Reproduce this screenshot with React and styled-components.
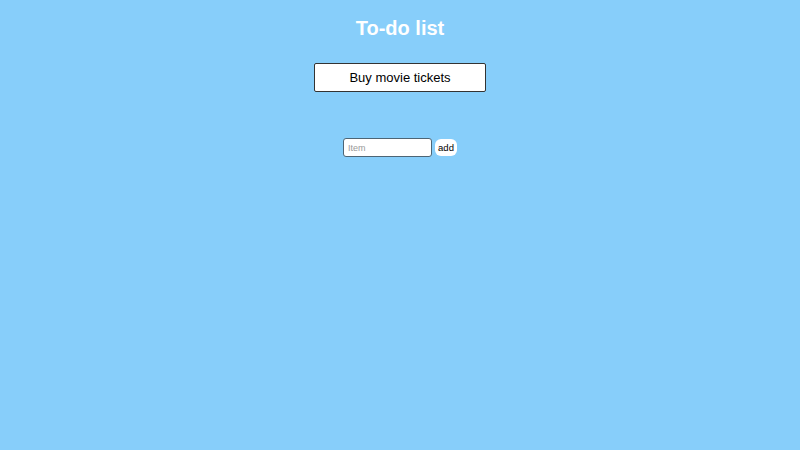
import React, { useState } from 'react';
import styled, { createGlobalStyle } from 'styled-components';

const GlobalStyle = createGlobalStyle`
  html, body {
    margin: 0;
    padding: 0;
    height: 100%;
    background: #87cefa;
    font-family: "Liberation Sans", Arial, sans-serif;
  }
`;

const Page = styled.div`
  display: flex;
  flex-direction: column;
  align-items: center;
  min-height: 450px;
`;

const Title = styled.h1`
  margin: 16px 0 0;
  font-size: 20px;
  line-height: 24px;
  font-weight: bold;
  color: #fff;
`;

const List = styled.ul`
  list-style: none;
  margin: 23px 0 0;
  padding: 0;
  display: flex;
  flex-direction: column;
  gap: 8px;
`;

const Item = styled.li`
  box-sizing: border-box;
  width: 172px;
  height: 29px;
  display: flex;
  align-items: center;
  justify-content: center;
  background: #fff;
  border: 1px solid #333;
  border-radius: 2px;
  font-size: 13px;
  color: #000;
`;

const Form = styled.form`
  margin-top: 46px;
  display: flex;
  align-items: center;
  gap: 3px;
`;

const Input = styled.input`
  box-sizing: border-box;
  width: 89px;
  height: 19px;
  padding: 0 4px;
  border: 1px solid #4d6575;
  border-radius: 3px;
  font-family: "Liberation Sans", Arial, sans-serif;
  font-size: 9px;
  background: #fff;
  &::placeholder {
    color: #999;
  }
`;

const AddButton = styled.button`
  box-sizing: border-box;
  height: 17px;
  padding: 0 3px;
  border: none;
  border-radius: 6px;
  background: #fff;
  font-family: "Liberation Sans", Arial, sans-serif;
  font-size: 9.5px;
  color: #000;
  cursor: pointer;
`;

export default function App() {
  const [items, setItems] = useState(['Buy movie tickets']);
  const [text, setText] = useState('');

  const addItem = e => {
    e.preventDefault();
    if (!text.trim()) return;
    setItems([...items, text.trim()]);
    setText('');
  };

  return (
    <>
      <GlobalStyle />
      <Page>
        <Title>To-do list</Title>
        <List>
          {items.map((item, i) => (
            <Item key={i}>{item}</Item>
          ))}
        </List>
        <Form onSubmit={addItem}>
          <Input placeholder="Item" value={text} onChange={e => setText(e.target.value)} />
          <AddButton type="submit">add</AddButton>
        </Form>
      </Page>
    </>
  );
}
